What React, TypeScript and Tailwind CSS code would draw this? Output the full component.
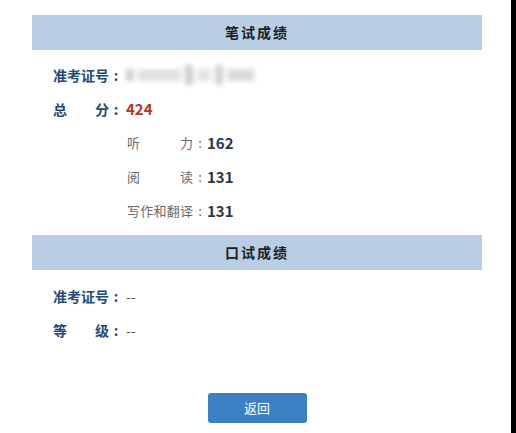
import React from 'react';

const font = { fontFamily: '"Noto Sans CJK SC", "Noto Sans", sans-serif' };

function Spread({ text, width }: { text: string; width: string }) {
  // label chars spread across a fixed width, like the original form labels
  return (
    <span className={`${width} flex justify-between`}>
      {text.split('').map((c, i) => (
        <span key={i}>{c}</span>
      ))}
    </span>
  );
}

function SectionHeader({ title }: { title: string }) {
  return (
    <div className="h-[35px] bg-[#b9cde4] flex items-center justify-center text-[14px] font-bold text-[#1d1d1d] tracking-[2px]">
      {title}
    </div>
  );
}

function MainRow({ label, children }: { label: string; children: React.ReactNode }) {
  return (
    <div className="h-[34px] flex items-center pl-[21px] text-[14px] font-bold text-[#1f4b7c]">
      <Spread text={label} width="w-[56px]" />
      <span className="w-[14px] text-center">:</span>
      <span className="ml-[3px] flex items-center">{children}</span>
    </div>
  );
}

function SubRow({ label, score }: { label: string; score: number }) {
  return (
    <div className="h-[34px] flex items-center pl-[95px] text-[13px] text-[#6a6a6a]">
      <Spread text={label} width="w-[66px]" />
      <span className="w-[14px] text-center">:</span>
      <span className="text-[15px] font-bold text-[#283848]">{score}</span>
    </div>
  );
}

export default function App() {
  return (
    <div className="flex w-[516px] h-[433px] bg-white" style={font}>
      <div className="w-[511px] h-full">
        <div className="ml-[32px] w-[450px] pt-[15px]">
          <SectionHeader title="笔试成绩" />
          <div className="mt-[8px]">
            <MainRow label="准考证号">
              <span className="relative w-[128px] h-[24px] block">
                <span className="absolute inset-0 flex items-center gap-[4px] blur-[2.5px]">
                  <span className="w-[8px] h-[12px] bg-[#cfcfcf]" />
                  <span className="w-[44px] h-[12px] bg-[#e0e0e0]" />
                  <span className="w-[8px] h-[20px] bg-[#cdcdcd]" />
                  <span className="w-[14px] h-[12px] bg-[#e4e4e4]" />
                  <span className="w-[8px] h-[20px] bg-[#d2d2d2]" />
                  <span className="w-[28px] h-[12px] bg-[#dadada]" />
                </span>
              </span>
            </MainRow>
            <MainRow label="总分">
              <span className="text-[15px] text-[#b3372b]">424</span>
            </MainRow>
            <SubRow label="听力" score={162} />
            <SubRow label="阅读" score={131} />
            <SubRow label="写作和翻译" score={131} />
          </div>
          <div className="mt-[7px]">
            <SectionHeader title="口试成绩" />
          </div>
          <div className="mt-[9px]">
            <MainRow label="准考证号">
              <span className="font-normal text-[#555]">--</span>
            </MainRow>
            <MainRow label="等级">
              <span className="font-normal text-[#555]">--</span>
            </MainRow>
          </div>
          <div className="mt-[46px] flex justify-center">
            <button className="w-[99px] h-[30px] rounded-[3px] bg-[#3b80c3] text-white text-[13px]">
              返回
            </button>
          </div>
        </div>
      </div>
      <div className="w-[5px] h-full bg-black" />
    </div>
  );
}
